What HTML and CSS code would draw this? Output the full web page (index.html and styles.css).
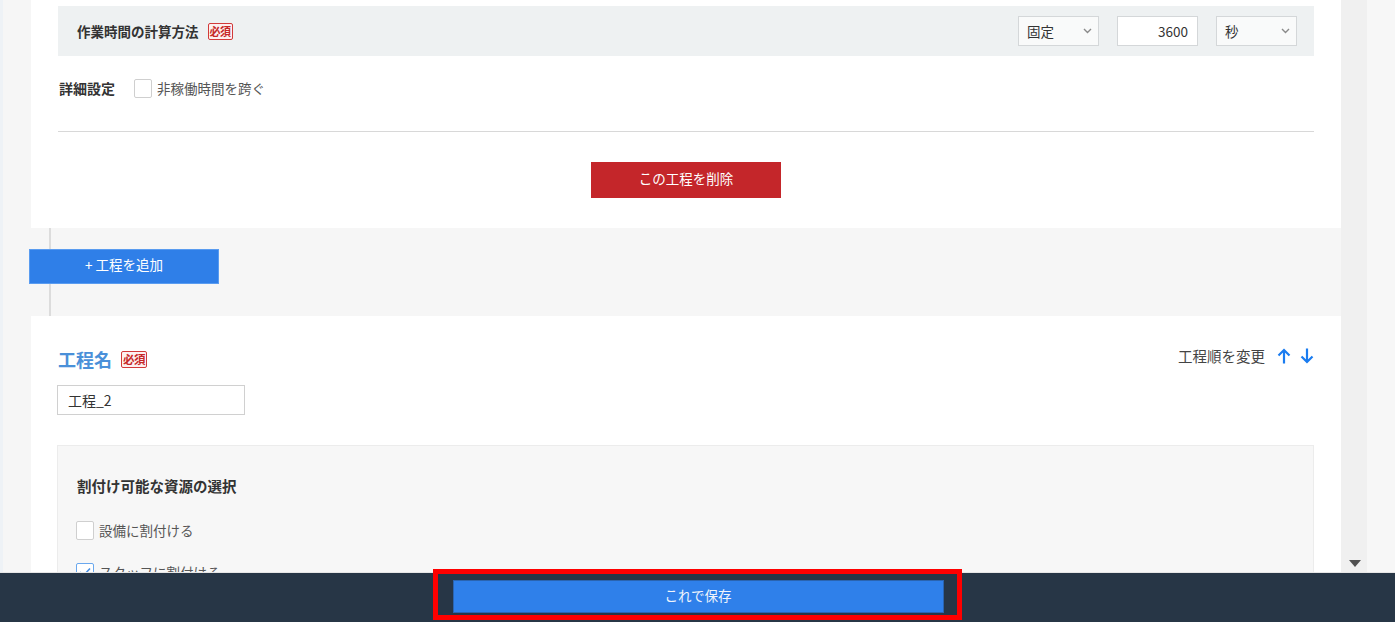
FILE: index.html
```html
<!DOCTYPE html>
<html lang="ja">
<head>
<meta charset="utf-8">
<title>工程設定</title>
<link rel="stylesheet" href="styles.css">
</head>
<body>
<div class="app">
  <div class="main">
    <section class="card card-top">
      <div class="field-row">
        <div class="field-label">作業時間の計算方法<span class="badge">必須</span></div>
        <div class="controls">
          <div class="select"><span>固定</span><svg class="chev" width="9" height="6" viewBox="0 0 9 6"><path d="M1 1l3.5 3.5L8 1" fill="none" stroke="#8a8a8a" stroke-width="1.4"/></svg></div>
          <div class="num">3600</div>
          <div class="select"><span>秒</span><svg class="chev" width="9" height="6" viewBox="0 0 9 6"><path d="M1 1l3.5 3.5L8 1" fill="none" stroke="#8a8a8a" stroke-width="1.4"/></svg></div>
        </div>
      </div>
      <div class="detail-row">
        <span class="detail-label">詳細設定</span>
        <label class="check"><span class="box"></span>非稼働時間を跨ぐ</label>
      </div>
      <hr class="divider">
      <div class="center"><button class="btn btn-danger">この工程を削除</button></div>
    </section>
    <div class="connector"><button class="btn btn-add">+ 工程を追加</button></div>
    <section class="card card-step">
      <div class="title-row">
        <div class="step-title">工程名<span class="badge badge-lg">必須</span></div>
        <div class="order">
          <span>工程順を変更</span>
          <svg width="14" height="16" viewBox="0 0 14 16"><path d="M7 15.5V2M1.5 7.5L7 2l5.5 5.5" fill="none" stroke="#1a7cf0" stroke-width="2.2"/></svg>
          <svg width="14" height="16" viewBox="0 0 14 16"><path d="M7 0.5V14M1.5 8.5L7 14l5.5-5.5" fill="none" stroke="#1a7cf0" stroke-width="2.2"/></svg>
        </div>
      </div>
      <div class="text-input">工程_2</div>
      <div class="resource-box">
        <div class="resource-title">割付け可能な資源の選択</div>
        <label class="check"><span class="box"></span>設備に割付ける</label>
        <label class="check"><span class="box checked"><svg width="12" height="10" viewBox="0 0 12 10"><path d="M1 5l3.5 3.5L11 1.5" fill="none" stroke="#4a90e2" stroke-width="1.6"/></svg></span>スタッフに割付ける</label>
      </div>
    </section>
  </div>
  <div class="scrollbar"><span class="arrow-down"></span></div>
</div>
<footer class="savebar">
  <button class="btn btn-save">これで保存</button>
  <div class="highlight"></div>
</footer>
</body>
</html>
```
FILE: styles.css
```css
* { box-sizing: border-box; }
html, body { margin: 0; padding: 0; }
body {
  width: 1395px;
  height: 622px;
  overflow: hidden;
  background: #f7f7f7;
  font-family: "Noto Sans CJK JP", "Noto Sans", sans-serif;
  font-size: 13.5px;
  color: #333;
}
.app {
  display: flex;
  height: 572px;
}
.main {
  width: 1341px;
  height: 572px;
  overflow: hidden;
  border-left: 3px solid #eef2f6;
  padding-left: 28px;
  background: #f6f6f6;
}
.card {
  background: #fff;
}
.card-top {
  padding: 6px 27px 30px 27px;
}
.field-row {
  height: 50px;
  background: #eef1f2;
  display: flex;
  align-items: center;
  justify-content: space-between;
  padding: 0 17px 0 19px;
}
.field-label {
  font-weight: bold;
  font-size: 13.5px;
  display: flex;
  align-items: center;
}
.badge {
  display: inline-block;
  margin-left: 9px;
  border: 1px solid #d23a3a;
  border-radius: 2px;
  background: #fdf0f0;
  color: #c62828;
  font-size: 11px;
  font-weight: bold;
  line-height: 15px;
  padding: 0 1px;
  letter-spacing: -0.5px;
}
.controls {
  display: flex;
  gap: 18px;
}
.select, .num {
  width: 81px;
  height: 30px;
  border: 1px solid #d4d7d9;
  display: flex;
  align-items: center;
  font-size: 13.5px;
  color: #333;
}
.select {
  background: #f9fafa;
  justify-content: space-between;
  padding: 0 6px 0 8px;
}
.num {
  background: #fff;
  justify-content: flex-end;
  padding-right: 9px;
}
.detail-row {
  margin-top: 22px;
  height: 20px;
  display: flex;
  align-items: center;
  padding-left: 1px;
}
.detail-label {
  font-weight: bold;
  font-size: 14px;
  margin-right: 19px;
}
.check {
  display: flex;
  align-items: center;
  height: 20px;
  color: #555;
  font-size: 13.5px;
}
.box {
  width: 18px;
  height: 19px;
  border: 1px solid #cfcfcf;
  border-radius: 2px;
  background: #fff;
  margin-right: 5px;
  display: flex;
  align-items: center;
  justify-content: center;
}
.box.checked {
  border-color: #6aa8ee;
}
.divider {
  margin: 33px 0 0 0;
  border: 0;
  border-top: 1px solid #d8d8d8;
  height: 0;
}
.center {
  display: flex;
  justify-content: center;
  margin-top: 30px;
}
.btn {
  font-family: inherit;
  font-size: 13.5px;
  color: #fff;
  border: 0;
  padding: 0;
  cursor: pointer;
  line-height: 1;
}
.btn-danger {
  width: 190px;
  height: 36px;
  background: #c4262a;
  padding-bottom: 2px;
}
.connector {
  height: 88px;
  margin-left: 18px;
  border-left: 2px solid #dcdcdc;
  padding-top: 21px;
}
.btn-add {
  width: 190px;
  height: 35px;
  margin-left: -22px;
  background: #2f7fe8;
  border: 1px solid #5a9cf0;
  padding-bottom: 3px;
}
.card-step {
  padding: 30px 27px 40px 26px;
}
.title-row {
  display: flex;
  justify-content: space-between;
  align-items: center;
  height: 26px;
}
.step-title {
  display: flex;
  align-items: center;
  font-size: 18px;
  font-weight: bold;
  color: #4a90d9;
  line-height: 26px;
  padding-left: 1px;
}
.badge-lg {
  margin-left: 9px;
  font-size: 11.5px;
  line-height: 15px;
}
.order {
  display: flex;
  align-items: center;
  padding-bottom: 7px;
  color: #444;
  font-size: 14.5px;
}
.order span {
  margin-right: 12px;
}
.order svg + svg {
  margin-left: 9px;
}
.text-input {
  margin-top: 13px;
  width: 188px;
  height: 30px;
  border: 1px solid #d0d0d0;
  background: #fff;
  display: flex;
  align-items: center;
  padding-left: 10px;
  font-size: 14px;
  color: #333;
}
.resource-box {
  margin-top: 30px;
  background: #f7f7f7;
  border: 1px solid #ececec;
  padding: 29px 19px 40px 18px;
  display: flex;
  flex-direction: column;
  gap: 22px;
  height: 300px;
}
.resource-title {
  font-weight: bold;
  font-size: 14.5px;
  line-height: 22px;
  color: #333;
  padding-left: 1px;
  margin-bottom: 1px;
}
.scrollbar {
  width: 26px;
  height: 572px;
  background: #f0f0f0;
  display: flex;
  flex-direction: column;
  justify-content: flex-end;
  align-items: center;
  padding-bottom: 5px;
  padding-left: 2px;
}
.arrow-down {
  width: 0;
  height: 0;
  border-left: 6px solid transparent;
  border-right: 6px solid transparent;
  border-top: 7px solid #505050;
}
.savebar {
  position: relative;
  height: 50px;
  background: #273646;
  border-top: 1px solid #e6e6e6;
  display: flex;
  justify-content: center;
  padding-top: 7px;
}
.btn-save {
  width: 491px;
  height: 33px;
  background: #2f80ea;
  border: 1px solid #2a64b0;
  color: #eef4fc;
  margin-left: 1px;
  padding-bottom: 2px;
}
.highlight {
  position: absolute;
  left: 433px;
  top: -4px;
  width: 529px;
  height: 51px;
  border: 5px solid #ff0000;
  pointer-events: none;
}
```
